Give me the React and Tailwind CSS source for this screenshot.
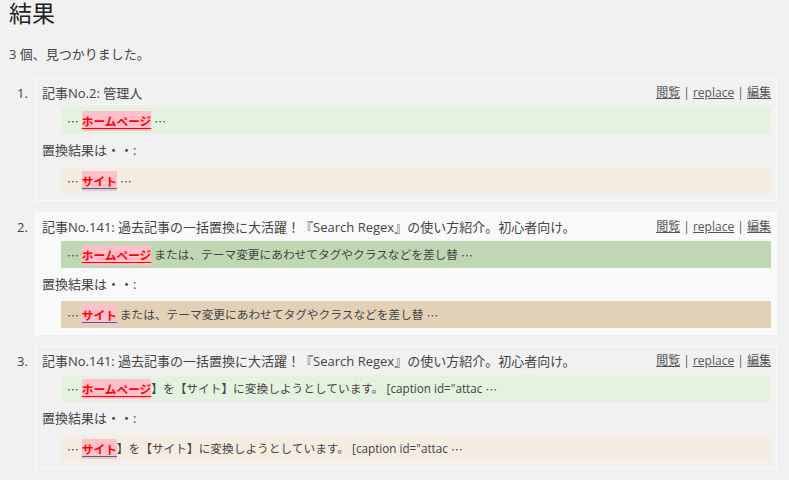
import React from 'react';

const results = [
  {
    title: '記事No.2: 管理人',
    alt: false,
    after: '',
  },
  {
    title: '記事No.141: 過去記事の一括置換に大活躍！『Search Regex』の使い方紹介。初心者向け。',
    alt: true,
    after: ' または、テーマ変更にあわせてタグやクラスなどを差し替',
  },
  {
    title: '記事No.141: 過去記事の一括置換に大活躍！『Search Regex』の使い方紹介。初心者向け。',
    alt: false,
    after: '】を【サイト】に変換しようとしています。 [caption id="attac',
  },
];

function Dots() {
  return <span className="font-['Noto_Sans_CJK_JP']">…</span>;
}

function Snippet({ word, rest, bg, line }) {
  return (
    <div className={`ml-[19px] h-[27px] flex items-center pl-[6px] text-[11.7px] whitespace-pre ${bg}`}>
      <Dots />
      <span> </span>
      <span
        className={`inline-block h-[20px] leading-[20px] bg-[#ffc0cb] text-[#ff0000] font-bold underline underline-offset-2 ${line}`}
      >
        {word}
      </span>
      <span>{rest}</span>
      <span> </span>
      <Dots />
    </div>
  );
}

export default function App() {
  return (
    <div
      className="min-h-[481px] bg-[#f1f1f1] text-[#444] text-[13px]"
      style={{ fontFamily: '"Open Sans", "Noto Sans CJK JP", sans-serif' }}
    >
      <h2 className="text-[23px] leading-[29px] pl-[9px] -mt-[1px] text-[#222]">結果</h2>
      <p className="pl-[9px] mt-[16px] leading-[20px]">3 個、見つかりました。</p>

      <ol className="mt-[14px] flex flex-col gap-[11px]">
        {results.map((r, i) => (
          <li key={i} className="flex">
            <div className="w-[35px] pl-[17px] pt-[5px] leading-[20px]">{i + 1}.</div>
            <div
              className={`flex-1 mr-[12px] h-[123px] border pl-[6px] pr-[5px] pt-[4px] ${
                r.alt ? 'bg-[#f9f9f9] border-[#fcfcfc]' : 'border-[#fafafa]'
              }`}
            >
              <div className="flex justify-between items-center leading-[20px] whitespace-nowrap">
                <span>{r.title}</span>
                <span className="text-[12px] text-[#555]">
                  <a className="underline">閲覧</a> | <a className="underline">replace</a> |{' '}
                  <a className="underline">編集</a>
                </span>
              </div>
              <div className="mt-[4px]">
                <Snippet
                  word="ホームページ"
                  rest={r.after}
                  bg={r.alt ? 'bg-[#bfd8b3]' : 'bg-[#e6f2e0]'}
                  line="decoration-[#ff0000]"
                />
              </div>
              <div className="mt-[6px] leading-[20px]">置換結果は・・:</div>
              <div className="mt-[7px]">
                <Snippet
                  word="サイト"
                  rest={r.after}
                  bg={r.alt ? 'bg-[#e2d1b7]' : 'bg-[#f5ede2]'}
                  line="decoration-[#21759b]"
                />
              </div>
            </div>
          </li>
        ))}
      </ol>
    </div>
  );
}
